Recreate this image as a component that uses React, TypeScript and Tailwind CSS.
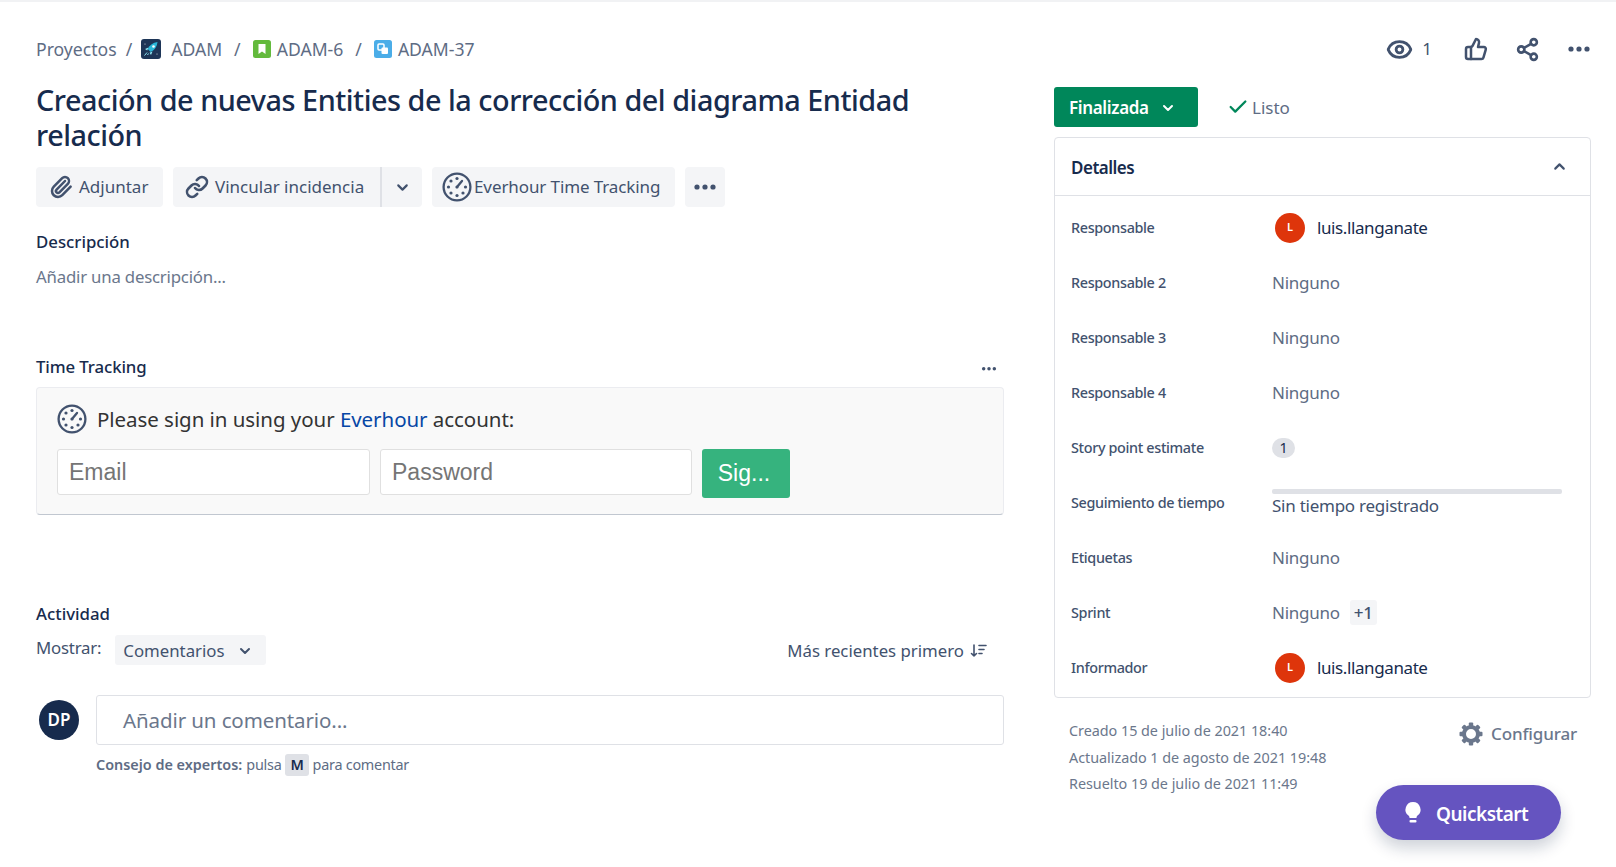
import { Check, ChevronDown, ChevronUp, Eye, Link, Paperclip, Share2, ThumbsUp } from 'lucide-react';

function Dots({ className }: { className: string }) {
  return (
    <svg viewBox="0 0 24 8" className={className} fill="currentColor">
      <circle cx="4" cy="4" r="2.6" />
      <circle cx="12" cy="4" r="2.6" />
      <circle cx="20" cy="4" r="2.6" />
    </svg>
  );
}

function EverhourIcon({ size }: { size: number }) {
  return (
    <svg width={size} height={size} viewBox="0 0 30 30" fill="none" className="shrink-0 text-[#42526e]">
      <circle cx="15" cy="15" r="13.4" stroke="currentColor" strokeWidth="2.3" />
      <path d="M15 15l5-6" stroke="currentColor" strokeWidth="2.3" strokeLinecap="round" />
      <g fill="currentColor">
        <circle cx="15" cy="6.5" r="1.6" />
        <circle cx="9" cy="9" r="1.6" />
        <circle cx="6.5" cy="15" r="1.6" />
        <circle cx="9" cy="21" r="1.6" />
        <circle cx="15" cy="23.5" r="1.6" />
        <circle cx="21" cy="21" r="1.6" />
        <circle cx="23.5" cy="15" r="1.6" />
        <circle cx="15" cy="15" r="1.6" />
      </g>
    </svg>
  );
}

function RocketIcon() {
  return (
    <svg width="20" height="20" viewBox="0 0 20 20" className="shrink-0">
      <rect width="20" height="20" rx="3" fill="#1d3557" />
      <path d="M16.500 3c-4.500.4-7.800 3-9.800 7l3 3c4-2 6.400-5.300 6.800-10z" fill="#29b6d8" />
      <path d="M7.500 8.500L4 10l2.200 1.500zM11.500 12.500L10 16l-1.500-2.200z" fill="#8fe6f5" />
      <circle cx="12.500" cy="7.500" r="1.300" fill="#fff" />
      <path d="M6 13.500L3.500 16.500M7.500 14.500L6.500 16" stroke="#8fe6f5" strokeWidth="1" />
      <circle cx="4" cy="5" r=".5" fill="#fff" />
      <circle cx="16" cy="15" r=".5" fill="#fff" />
    </svg>
  );
}

function StoryIcon() {
  return (
    <svg width="18" height="18" viewBox="0 0 18 18" className="shrink-0">
      <rect width="18" height="18" rx="2.500" fill="#63ba3c" />
      <path d="M5.500 4h7v10L9 11.500 5.500 14z" fill="#fff" />
    </svg>
  );
}

function SubtaskIcon() {
  return (
    <svg width="18" height="18" viewBox="0 0 18 18" className="shrink-0">
      <rect width="18" height="18" rx="2.500" fill="#4bade8" />
      <rect x="4" y="4" width="6" height="6" rx="1" fill="none" stroke="#fff" strokeWidth="1.500" />
      <rect x="7.500" y="7.500" width="6.500" height="6.500" rx="1" fill="#fff" />
    </svg>
  );
}

function SortIcon() {
  return (
    <svg width="18" height="16" viewBox="0 0 18 16" fill="none" stroke="#42526e" strokeWidth="1.600" strokeLinecap="round" strokeLinejoin="round">
      <path d="M4 2v11M1.500 10.500L4 13l2.500-2.500M9 2.500h7M9 6.500h5M9 10.500h3" />
    </svg>
  );
}

function Gear() {
  const teeth = [0, 45, 90, 135, 180, 225, 270, 315];
  return (
    <svg width="24" height="24" viewBox="0 0 24 24" className="shrink-0 text-[#6b778c]">
      <circle cx="12" cy="12" r="7" fill="none" stroke="currentColor" strokeWidth="4" />
      {teeth.map((deg) => (
        <rect key={deg} x="9.800" y="0.500" width="4.400" height="5" rx="1" fill="currentColor" transform={`rotate(${deg} 12 12)`} />
      ))}
    </svg>
  );
}

function Bulb() {
  return (
    <svg width="18" height="23" viewBox="0 0 18 23" fill="#fff">
      <path d="M9 1a7.500 7.500 0 0 0-4.500 13.500c.7.600 1 1.300 1 2V17h7v-.5c0-.7.300-1.400 1-2A7.500 7.500 0 0 0 9 1z" />
      <rect x="5.500" y="19" width="7" height="2.500" rx="1" />
    </svg>
  );
}

function Avatar() {
  return (
    <span className="flex h-[30px] w-[30px] items-center justify-center rounded-full bg-[#de350b] text-[11px] font-semibold text-white">
      L
    </span>
  );
}

const rows = ['Responsable 2', 'Responsable 3', 'Responsable 4'];

function Row({ label, children }: { label: string; children: React.ReactNode }) {
  return (
    <div className="flex h-[55px] items-center">
      <div className="w-[202px] shrink-0 text-[14.4px] font-medium tracking-[-0.35px] text-[#42526e]">{label}</div>
      <div className="flex min-w-0 flex-1 items-center text-[17px] tracking-[-0.25px]">{children}</div>
    </div>
  );
}

export default function App() {
  return (
    <div className="relative h-[867px] w-[1616px] overflow-hidden border-t-2 border-[#f1f2f4] bg-white font-['Noto_Sans',sans-serif] text-[#172b4d]">
      <div className="flex pl-9 pr-[25px] pt-[34px]">
        <div className="w-[968px] shrink-0">
          <nav className="flex h-[26px] items-center text-[17.600px] text-[#5e6c84]">
            <span>Proyectos</span>
            <span className="mx-[9px]">/</span>
            <RocketIcon />
            <span className="ml-[10px]">ADAM</span>
            <span className="mx-3">/</span>
            <StoryIcon />
            <span className="ml-[6px]">ADAM-6</span>
            <span className="mx-3">/</span>
            <SubtaskIcon />
            <span className="ml-[6px]">ADAM-37</span>
          </nav>
          <h1 className="mt-5 w-[920px] text-[28.800px] leading-[35px] font-medium tracking-[-0.47px]">
            Creación de nuevas Entities de la corrección del diagrama Entidad relación
          </h1>
          <div className="mt-[15px] flex h-10 items-center gap-[10px] text-[17px] text-[#42526e]">
            <button className="flex h-10 w-[127px] items-center gap-[6px] rounded-[4px] bg-[#f4f5f7] pl-[13px]">
              <Paperclip size={24} strokeWidth={2.500} />
              Adjuntar
            </button>
            <div className="flex h-10 overflow-hidden rounded-[4px] bg-[#f4f5f7]">
              <button className="flex w-[207px] items-center gap-[6px] pl-3">
                <Link size={24} strokeWidth={2.600} />
                Vincular incidencia
              </button>
              <button className="flex w-[42px] items-center justify-center border-l-2 border-[#dfe1e6]">
                <ChevronDown size={17} strokeWidth={3} />
              </button>
            </div>
            <button className="flex h-10 w-[243px] items-center gap-[2px] rounded-[4px] bg-[#f4f5f7] pl-[10px] tracking-[-0.1px]">
              <EverhourIcon size={30} />
              Everhour Time Tracking
            </button>
            <button className="flex h-10 w-10 items-center justify-center rounded-[4px] bg-[#f4f5f7]">
              <Dots className="w-[24px]" />
            </button>
          </div>
          <h2 className="mt-[22px] text-[16.800px] leading-[26px] font-medium">Descripción</h2>
          <p className="mt-[9px] text-[16.800px] leading-[26px] tracking-[-0.2px] text-[#6b778c]">Añadir una descripción...</p>
          <div className="mt-[64px] flex h-[26px] items-center justify-between pr-[7px]">
            <h2 className="text-[16.800px] font-medium tracking-[-0.1px]">Time Tracking</h2>
            <Dots className="mt-1 w-[16px] text-[#42526e]" />
          </div>
          <section className="mt-[7px] h-[128px] rounded-[4px] border border-[#ebecf0] border-b-[#c1c7d0] bg-[#f9f9f9] px-5 pt-4">
            <div className="flex items-center gap-[10px] text-[20.500px] tracking-[-0.05px] text-[#333]">
              <EverhourIcon size={30} />
              <span>
                Please sign in using your <span className="text-[#0747a6]">Everhour</span> account:
              </span>
            </div>
            <div className="mt-[14px] flex items-start gap-[10px] font-['Liberation_Sans',sans-serif] text-[23px]">
              <div className="flex h-[46px] w-[313px] items-center rounded-[3px] border border-[#e0e0e0] bg-white pl-[11px] text-[#757575]">Email</div>
              <div className="flex h-[46px] w-[312px] items-center rounded-[3px] border border-[#e0e0e0] bg-white pl-[11px] text-[#757575]">Password</div>
              <button className="h-[49px] w-[88px] rounded-[3px] bg-[#36b37e] pr-[4px] text-white">Sig...</button>
            </div>
          </section>
          <h2 className="mt-[86px] text-[16.800px] leading-[26px] font-medium">Actividad</h2>
          <div className="mt-[8px] flex h-[30px] items-center justify-between pr-4">
            <div className="flex items-center gap-[14px] text-[16.800px] text-[#42526e]">
              <span className="-mt-1 tracking-[-0.2px]">Mostrar:</span>
              <button className="flex h-[30px] w-[151px] items-center gap-[12px] rounded-[3px] bg-[#f4f5f7] pl-2 pt-[2px]">
                Comentarios
                <ChevronDown size={16} strokeWidth={3} />
              </button>
            </div>
            <div className="flex items-center gap-[6px] pt-[2px] text-[16.800px] text-[#42526e]">
              Más recientes primero
              <SortIcon />
            </div>
          </div>
          <div className="mt-[30px] flex gap-[17px]">
            <span className="ml-[3px] mt-[5px] flex h-10 w-10 items-center justify-center rounded-full bg-[#172b4d] text-[17px] font-semibold text-white">
              DP
            </span>
            <div className="flex-1">
              <div className="flex h-[50px] items-center rounded-[3px] border border-[#dfe1e6] pl-[26px] text-[20.500px] tracking-[-0.1px] text-[#6b778c]">
                Añadir un comentario...
              </div>
              <p className="mt-[9px] flex items-center text-[14.400px] tracking-[-0.25px] text-[#5e6c84]">
                <strong className="font-semibold tracking-normal">Consejo de expertos:</strong>
                <span className="ml-1">pulsa</span>
                <kbd className="mx-1 rounded-[3px] bg-[#dfe1e6] px-[5px] font-['Noto_Sans',sans-serif] font-semibold text-[#172b4d]">M</kbd>
                para comentar
              </p>
            </div>
          </div>
        </div>
        <aside className="ml-[50px] flex-1">
          <div className="flex h-[26px] items-center justify-end text-[#42526e]">
            <Eye size={27} strokeWidth={2.500} />
            <span className="ml-[9px] text-[17px]">1</span>
            <ThumbsUp size={24} strokeWidth={2.500} className="ml-[32px]" />
            <Share2 size={25} strokeWidth={2.500} className="ml-[27px]" />
            <Dots className="ml-[27px] w-[24px]" />
          </div>
          <div className="mt-[25px] flex items-center">
            <button className="flex h-10 w-[144px] items-center gap-[11px] rounded-[3px] bg-[#00875a] pl-[15px] pt-[1px] text-[17px] font-semibold tracking-[-0.35px] text-white">
              Finalizada
              <ChevronDown size={16} strokeWidth={3} />
            </button>
            <Check size={22} strokeWidth={2.500} className="ml-[29px] text-[#00875a]" />
            <span className="ml-[3px] mt-[1px] text-[17px] text-[#5e6c84]">Listo</span>
          </div>
          <section className="mt-[10px] h-[561px] rounded-[4px] border border-[#dfe1e6]">
            <div className="flex h-[58px] items-center justify-between border-b border-[#dfe1e6] pl-4 pr-[22px]">
              <h2 className="pt-[2px] text-[17px] font-semibold tracking-[-0.5px]">Detalles</h2>
              <ChevronUp size={17} strokeWidth={3} className="text-[#42526e]" />
            </div>
            <div className="px-4 pt-[4px]">
              <Row label="Responsable">
                <span className="ml-[2px]"><Avatar /></span>
                <span className="ml-3 tracking-[-0.4px]">luis.llanganate</span>
              </Row>
              {rows.map((label) => (
                <Row key={label} label={label}>
                  <span className="-ml-px text-[#5e6c84]">Ninguno</span>
                </Row>
              ))}
              <Row label="Story point estimate">
                <span className="-ml-px flex h-5 w-[23px] items-center justify-center rounded-full bg-[#dfe1e6] text-[14.400px]">1</span>
              </Row>
              <Row label="Seguimiento de tiempo">
                <div className="-ml-px mt-[2px] w-[290px]">
                  <div className="h-[5px] rounded-[2px] bg-[#dfe1e6]" />
                  <div className="-mt-[1px] text-[#42526e]">Sin tiempo registrado</div>
                </div>
              </Row>
              <Row label="Etiquetas">
                <span className="-ml-px text-[#5e6c84]">Ninguno</span>
              </Row>
              <Row label="Sprint">
                <span className="-ml-px text-[#5e6c84]">Ninguno</span>
                <span className="ml-[10px] flex h-[25px] w-[27px] items-center justify-center rounded-[3px] bg-[#f4f5f7] font-medium text-[#42526e]">+1</span>
              </Row>
              <Row label="Informador">
                <span className="ml-[2px]"><Avatar /></span>
                <span className="ml-3 tracking-[-0.4px]">luis.llanganate</span>
              </Row>
            </div>
          </section>
          <div className="mt-[20px] flex items-start justify-between pl-[15px] pr-[14px]">
            <div className="text-[14.400px] leading-[26.500px] tracking-[-0.04px] text-[#6b778c]">
              <div>Creado 15 de julio de 2021 18:40</div>
              <div>Actualizado 1 de agosto de 2021 19:48</div>
              <div>Resuelto 19 de julio de 2021 11:49</div>
            </div>
            <div className="flex items-center gap-2 pt-[3px] text-[17px] font-medium tracking-[-0.15px] text-[#6b778c]">
              <Gear />
              Configurar
            </div>
          </div>
        </aside>
      </div>
      <button className="absolute left-[1376px] top-[783px] flex h-[55px] w-[185px] items-center gap-[14px] rounded-[28px] bg-[#6554c0] pl-[28px] text-[19px] font-semibold tracking-[-0.5px] text-white shadow-[0_8px_16px_rgba(9,30,66,0.2)]">
        <Bulb />
        <span className="pt-1">Quickstart</span>
      </button>
    </div>
  );
}
